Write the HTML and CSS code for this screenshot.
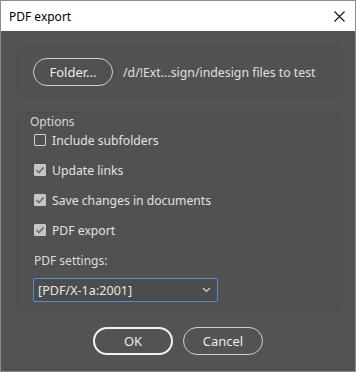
FILE: index.html
```html
<!DOCTYPE html>
<html lang="en">
<head>
    <meta charset="UTF-8">
    <title>PDF export</title>
    <link rel="stylesheet" href="styles.css">
</head>
<body>
    <div class="ventana">
        <!-- Barra de titulo -->
        <div class="titulo">
            <span>PDF export</span>
            <svg class="cerrar" width="11" height="11" viewBox="0 0 11 11">
                <path d="M0.5 0.5 L10.5 10.5 M10.5 0.5 L0.5 10.5" stroke="#111" stroke-width="1.1" fill="none"/>
            </svg>
        </div>

        <div class="contenido">
            <!-- Carpeta -->
            <div class="panel panel-carpeta">
                <button class="boton">Folder...</button>
                <span class="ruta">/d/!Ext...sign/indesign files to test</span>
            </div>

            <!-- Opciones -->
            <div class="panel panel-opciones">
                <div class="panel-titulo">Options</div>
                <label class="opcion"><span class="caja"></span>Include subfolders</label>
                <label class="opcion"><span class="caja marcada"><svg width="12" height="12" viewBox="0 0 12 12"><path d="M2.5 6.2 L5 8.6 L9.6 3.4" stroke="#6e6e6e" stroke-width="1.6" fill="none"/></svg></span>Update links</label>
                <label class="opcion"><span class="caja marcada"><svg width="12" height="12" viewBox="0 0 12 12"><path d="M2.5 6.2 L5 8.6 L9.6 3.4" stroke="#6e6e6e" stroke-width="1.6" fill="none"/></svg></span>Save changes in documents</label>
                <label class="opcion"><span class="caja marcada"><svg width="12" height="12" viewBox="0 0 12 12"><path d="M2.5 6.2 L5 8.6 L9.6 3.4" stroke="#6e6e6e" stroke-width="1.6" fill="none"/></svg></span>PDF export</label>

                <div class="ajustes-titulo">PDF settings:</div>
                <div class="desplegable">
                    <span>[PDF/X-1a:2001]</span>
                    <svg width="9" height="6" viewBox="0 0 9 6">
                        <path d="M1 1 L4.5 4.5 L8 1" stroke="#d8d8d8" stroke-width="1.2" fill="none"/>
                    </svg>
                </div>
            </div>

            <!-- Botones -->
            <div class="botones">
                <button class="boton principal">OK</button>
                <button class="boton">Cancel</button>
            </div>
        </div>
    </div>
</body>
</html>
```

FILE: styles.css
```css
/* Estilos generales */
body {
    margin: 0;
    font-family: "Noto Sans", Arial, sans-serif;
    font-size: 12px;
    background-color: #535353;
}

.ventana {
    box-sizing: border-box;
    width: 356px;
    height: 372px;
    border: 1px solid #8c8c8c;
    background-color: #535353;
    color: #e2e2e2;
}

/* Barra de titulo */
.titulo {
    height: 30px;
    background-color: #fff;
    color: #000;
    display: flex;
    align-items: center;
    justify-content: space-between;
    padding: 0 10px 0 8px;
    font-size: 12px;
}

.contenido {
    padding: 16px 15px 0 16px;
}

/* Paneles */
.panel {
    border: 1px solid #4c4c4c;
    background-color: #515151;
    border-radius: 2px;
}

.panel-carpeta {
    box-sizing: border-box;
    height: 50px;
    display: flex;
    align-items: center;
    padding-left: 15px;
    gap: 10px;
}

.ruta {
    font-size: 12.3px;
    color: #e0e0e0;
}

.panel-opciones {
    box-sizing: border-box;
    height: 200px;
    margin-top: 15px;
    padding: 1px 0 0 12px;
}

.panel-titulo {
    line-height: 16px;
    color: #d6d6d6;
}

.opcion {
    display: flex;
    align-items: center;
    height: 20px;
    margin-top: 10px;
    padding-left: 4px;
    gap: 6px;
    font-size: 12.2px;
}

.opcion:first-of-type {
    margin-top: 0;
}

.caja {
    box-sizing: border-box;
    width: 12px;
    height: 12px;
    border: 1px solid #d2d2d2;
    border-radius: 1px;
    display: flex;
}

.caja.marcada {
    background-color: #c6c6c6;
    border-color: #c6c6c6;
}

.caja svg {
    margin: -1px;
}

.ajustes-titulo {
    margin-top: 13px;
    line-height: 16px;
    padding-left: 4px;
    color: #dcdcdc;
}

.desplegable {
    box-sizing: border-box;
    width: 185px;
    height: 24px;
    margin-top: 9px;
    margin-left: 3px;
    border: 1px solid #4f8fd8;
    border-radius: 2px;
    background-color: #4c4c4c;
    display: flex;
    align-items: center;
    justify-content: space-between;
    padding: 0 6px 0 4px;
    font-size: 12.6px;
    color: #e6e6e6;
}

/* Botones */
.boton {
    box-sizing: border-box;
    width: 80px;
    height: 28px;
    border: 1px solid #d0d0d0;
    border-radius: 14px;
    background-color: transparent;
    color: #ececec;
    font-family: "Noto Sans", Arial, sans-serif;
    font-size: 13px;
    padding: 0;
}

.boton.principal {
    border: 2px solid #f2f2f2;
}

.botones {
    display: flex;
    justify-content: center;
    gap: 10px;
    margin-top: 15px;
    margin-left: -16px;
    margin-right: -15px;
}
```
